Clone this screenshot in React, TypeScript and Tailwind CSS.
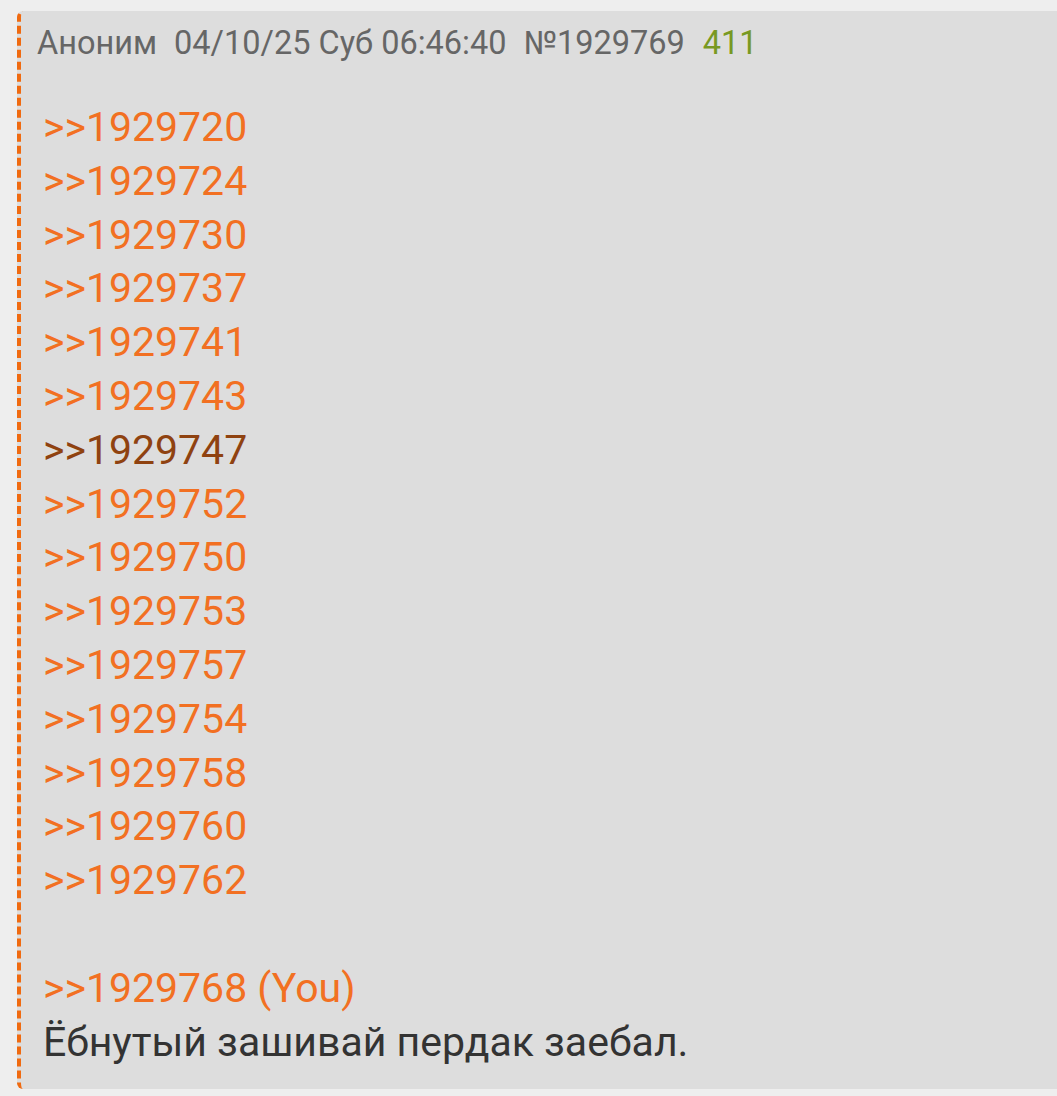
const replies = [
  "1929720",
  "1929724",
  "1929730",
  "1929737",
  "1929741",
  "1929743",
  "1929747",
  "1929752",
  "1929750",
  "1929753",
  "1929757",
  "1929754",
  "1929758",
  "1929760",
  "1929762",
];

export default function App() {
  return (
    <div
      className="min-h-[1096px] w-[1057px] bg-[#eeeeee] pt-[11px] pl-[17px]"
      style={{ fontFamily: "Roboto, 'Noto Sans', sans-serif" }}
    >
      <div className="h-[1078px] rounded-l-[6px] border-l-4 border-dashed border-[#f06a10] bg-[#dddddd] pl-[16px] pt-[12px]">
        <div className="flex items-center gap-[17px] text-[32.5px] leading-[40px] text-[#666666]">
          <span>Аноним</span>
          <span>04/10/25 Суб 06:46:40</span>
          <span>№1929769</span>
          <span className="ml-[1px] text-[#789922]">411</span>
        </div>
        <div className="mt-[38px] pl-[6px] text-[41px] leading-[53.8px]">
          {replies.map((r) => (
            <div
              key={r}
              className={r === "1929747" ? "text-[#8f4210]" : "text-[#f27022]"}
            >
              &gt;&gt;{r}
            </div>
          ))}
          <div className="h-[53.8px]" />
          <div className="text-[#f27022]">&gt;&gt;1929768 (You)</div>
          <div className="text-[#333333]">Ёбнутый зашивай пердак заебал.</div>
        </div>
      </div>
    </div>
  );
}
